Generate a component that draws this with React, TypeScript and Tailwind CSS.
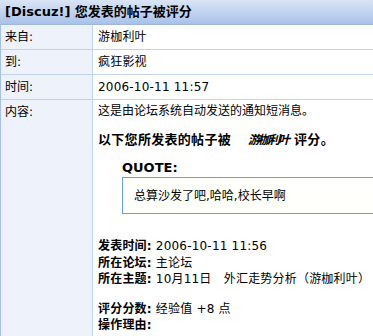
const font = { fontFamily: '"DejaVu Sans", "Noto Sans CJK SC", sans-serif' };

const rows: [string, string][] = [
  ["来自:", "游枷利叶"],
  ["到:", "疯狂影视"],
  ["时间:", "2006-10-11 11:57"],
];

export default function App() {
  return (
    <div className="w-[373px] h-[336px] overflow-hidden bg-white text-[12px] text-black" style={font}>
      {/* Header */}
      <div className="h-[25px] flex items-center px-[5px] bg-gradient-to-b from-[#dae5f6] to-[#a9c1e9] border-b border-[#9fb8e0] font-bold text-[13px]">
        [Discuz!] 您发表的帖子被评分
      </div>

      <div className="border-l border-[#a9c0e6]">
        {rows.map(([k, v]) => (
          <div key={k} className="flex h-[25px] border-b border-[#c2d2ec]">
            <div className="w-[92px] shrink-0 bg-[#eef2fb] border-r border-[#c2d2ec] flex items-center px-[4px]">{k}</div>
            <div className="flex-1 flex items-center px-[5px] tracking-[0.2px]">{v}</div>
          </div>
        ))}

        <div className="flex h-[240px]">
          <div className="w-[92px] shrink-0 bg-[#eef2fb] border-r border-[#c2d2ec] px-[4px] pt-[3px]">内容:</div>
          <div className="flex-1 min-w-0 pl-[5px] pt-[3px] leading-[16px] whitespace-nowrap">
            <div>这是由论坛系统自动发送的通知短消息。</div>
            <div className="mt-[13px] font-bold text-[13px] tracking-[0.3px] flex items-baseline">
              <span>以下您所发表的帖子被</span>
              <i className="ml-[17px] mr-[6px] text-[12px] tracking-[-2px]">游枷利叶</i>
              <span>评分。</span>
            </div>
            <div className="ml-[24px] mt-[12px]">
              <div className="font-bold text-[13px]">QUOTE:</div>
              <div className="mt-[1px] h-[37px] border border-[#6a9be6] bg-[#fffffb] flex items-center px-[11px] -mr-[40px]">
                总算沙发了吧,哈哈,校长早啊
              </div>
            </div>
            <div className="mt-[24px] leading-[16.5px] tracking-[0.2px]">
              <div><b>发表时间:</b> 2006-10-11 11:56</div>
              <div><b>所在论坛:</b> 主论坛</div>
              <div><b>所在主题:</b> 10月11日　外汇走势分析（游枷利叶）</div>
              <div className="mt-[13px]"><b>评分分数:</b> 经验值 +8 点</div>
              <div><b>操作理由:</b></div>
            </div>
          </div>
        </div>
      </div>
    </div>
  );
}
